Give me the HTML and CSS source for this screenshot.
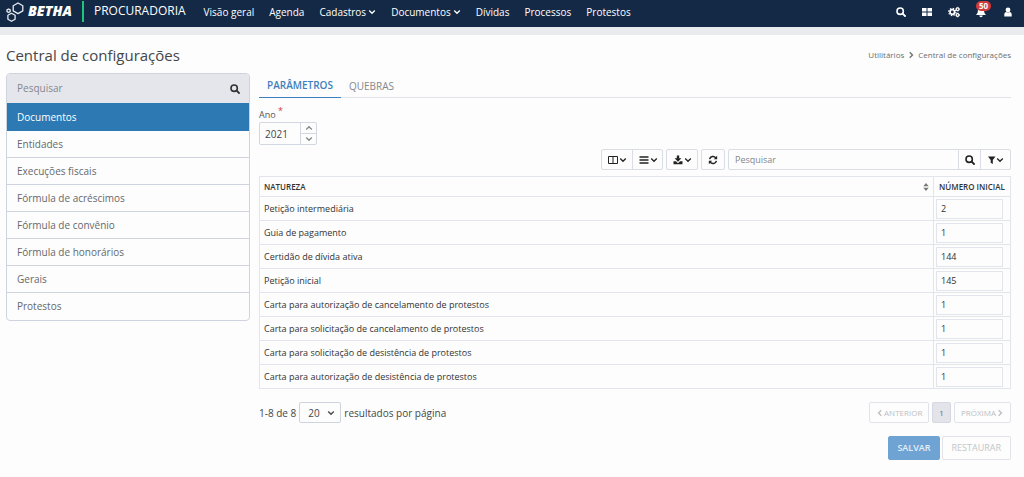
FILE: index.html
```html
<!DOCTYPE html>
<html lang="pt-BR">
<head>
<meta charset="utf-8">
<meta name="viewport" content="width=device-width, initial-scale=1">
<title>Central de configurações</title>
<link rel="stylesheet" href="styles.css">
</head>
<body>
<svg class="sprite" aria-hidden="true">
  <symbol id="search" viewBox="0 0 12 12"><circle cx="5" cy="5" r="3.8" fill="none" stroke="currentColor" stroke-width="1.9"/><path d="M8 8L10.800 10.800" stroke="currentColor" stroke-width="2.2" stroke-linecap="round"/></symbol>
  <symbol id="down" viewBox="0 0 8 8"><path d="M1.2 2.5L4 5.3L6.800 2.5" fill="none" stroke="currentColor" stroke-width="1.3"/></symbol>
  <symbol id="up" viewBox="0 0 8 8"><path d="M1.2 5.5L4 2.700L6.800 5.500" fill="none" stroke="currentColor" stroke-width="1.3"/></symbol>
  <symbol id="left" viewBox="0 0 8 8"><path d="M5.300 1.200L2.500 4L5.300 6.800" fill="none" stroke="currentColor" stroke-width="1.300"/></symbol>
  <symbol id="right" viewBox="0 0 8 8"><path d="M2.700 1.200L5.500 4L2.700 6.800" fill="none" stroke="currentColor" stroke-width="1.300"/></symbol>
</svg>

<header class="topbar">
  <a class="brand" href="#">
    <svg class="brand-mark" viewBox="0 0 18 20" aria-hidden="true"><g fill="none" stroke="#e8edf4" stroke-width="1.300" stroke-linejoin="round"><path d="M12 1l4.800 2.700v5.200L12 11.600 7.200 8.900V3.700z"/><path d="M5.500 11.300l3.600 2v4l-3.600 2-3.600-2v-4z"/><path d="M2.600 7l1.600.9v1.700l-1.600.9-1.600-.9V7.900z"/></g></svg>
    <span class="brand-name">BETHA</span>
  </a>
  <span class="product">PROCURADORIA</span>
  <nav class="menu">
    <a href="#">Visão geral</a>
    <a href="#">Agenda</a>
    <a href="#">Cadastros<svg class="chev"><use href="#down"/></svg></a>
    <a href="#">Documentos<svg class="chev"><use href="#down"/></svg></a>
    <a href="#">Dívidas</a>
    <a href="#">Processos</a>
    <a href="#">Protestos</a>
  </nav>
  <div class="tools">
    <button type="button" aria-label="Pesquisar"><svg class="icon small"><use href="#search"/></svg></button>
    <button type="button" aria-label="Aplicativos"><svg class="icon" viewBox="0 0 12 12"><path fill="currentColor" d="M1 2h4.500v3.500H1zM6.500 2H11v3.500H6.500zM1 6.500h4.500V10H1zM6.500 6.500H11V10H6.500z"/></svg></button>
    <button type="button" aria-label="Configurações"><svg class="icon" viewBox="0 0 12 12"><g fill="none" stroke="currentColor"><circle cx="4.300" cy="6" r="2.300" stroke-width="1.700"/><circle cx="4.300" cy="6" r="3.600" stroke-width="1.200" stroke-dasharray="1.400 1.427"/><circle cx="9.600" cy="3.200" r="1.300" stroke-width="1.200"/><circle cx="9.600" cy="9" r="1.300" stroke-width="1.200"/><circle cx="9.600" cy="3.200" r="2" stroke-width=".8" stroke-dasharray="1 1.100"/><circle cx="9.600" cy="9" r="2" stroke-width=".8" stroke-dasharray="1 1.100"/></g></svg></button>
    <button type="button" class="bell" aria-label="Notificações"><svg class="icon" viewBox="0 0 12 12"><path fill="currentColor" d="M6 2c2.200 0 3.200 1.500 3.200 3.300 0 1.700.7 2.700 1.900 3.700H.9c1.200-1 1.900-2 1.900-3.700C2.800 3.500 3.800 2 6 2zM4.300 9.500h3.400a1.700 1.700 0 0 1-3.400 0z"/></svg><span class="badge">50</span></button>
    <button type="button" aria-label="Usuário"><svg class="icon" viewBox="0 0 12 12"><circle cx="6" cy="4" r="2.400" fill="currentColor"/><path fill="currentColor" d="M2.300 10.500V8.500C2.300 6.900 3.200 5.900 4.300 5.900c1 .9 2.400.9 3.400 0 1.100 0 2 1 2 2.600v2z"/></svg></button>
  </div>
</header>

<main class="page">
  <div class="heading">
    <h1>Central de configurações</h1>
    <nav class="crumbs" aria-label="Trilha"><a href="#">Utilitários</a><svg class="chev"><use href="#right"/></svg><a href="#">Central de configurações</a></nav>
  </div>

  <div class="columns">
    <aside class="sidebar">
      <form class="side-search">
        <input type="text" placeholder="Pesquisar" aria-label="Pesquisar configuração">
        <button type="button" aria-label="Buscar"><svg class="icon small"><use href="#search"/></svg></button>
      </form>
      <nav class="side-list">
        <a class="active" href="#">Documentos</a>
        <a href="#">Entidades</a>
        <a href="#">Execuções fiscais</a>
        <a href="#">Fórmula de acréscimos</a>
        <a href="#">Fórmula de convênio</a>
        <a href="#">Fórmula de honorários</a>
        <a href="#">Gerais</a>
        <a href="#">Protestos</a>
      </nav>
    </aside>

    <section class="content">
      <div class="tabs" role="tablist">
        <button type="button" role="tab" aria-selected="true" class="tab current">PARÂMETROS</button>
        <button type="button" role="tab" aria-selected="false" class="tab">QUEBRAS</button>
      </div>

      <div class="field">
        <label for="ano">Ano <sup>*</sup></label>
        <div class="spinner">
          <input id="ano" type="text" inputmode="numeric" value="2021">
          <div class="steps">
            <button type="button" aria-label="Aumentar"><svg class="chev"><use href="#up"/></svg></button>
            <button type="button" aria-label="Diminuir"><svg class="chev"><use href="#down"/></svg></button>
          </div>
        </div>
      </div>

      <div class="toolbar">
        <div class="group">
          <button type="button" class="wide" aria-label="Colunas"><svg class="icon" viewBox="0 0 12 12"><path fill="none" stroke="currentColor" d="M1.500 2.500h9v7h-9zM6 2.500v7" stroke-width="1"/></svg><svg class="chev"><use href="#down"/></svg></button>
          <button type="button" class="wide" aria-label="Densidade"><svg class="icon" viewBox="0 0 12 12"><path stroke="currentColor" stroke-width="1.400" d="M1.500 3h9M1.500 6h9M1.500 9h9"/></svg><svg class="chev"><use href="#down"/></svg></button>
        </div>
        <div class="group"><button type="button" class="wide" aria-label="Exportar"><svg class="icon" viewBox="0 0 12 12"><path fill="currentColor" d="M4.800 1.500h2.400v2.800h2.200L6 7.700 2.600 4.300h2.200zM1.500 7.300h2.400L6 9.200l2.100-1.900h2.400v3h-9z"/></svg><svg class="chev"><use href="#down"/></svg></button></div>
        <div class="group"><button type="button" class="narrow" aria-label="Atualizar"><svg class="icon small" viewBox="0 0 12 12"><path fill="none" stroke="currentColor" stroke-width="1.800" d="M1.900 5A4.200 4.200 0 0 1 9.400 3.500M10.100 7A4.200 4.200 0 0 1 2.600 8.500"/><path fill="currentColor" d="M11 1v4H7zM1 11V7h4z"/></svg></button></div>
        <form class="group search">
          <input type="text" placeholder="Pesquisar" aria-label="Pesquisar natureza">
          <button type="button" class="narrow" aria-label="Buscar"><svg class="icon small"><use href="#search"/></svg></button>
          <button type="button" class="wide" aria-label="Filtrar"><svg class="icon filter" viewBox="0 0 9 12"><path fill="currentColor" d="M1 2.500h7.500L5.800 6V10L3.700 8.800V6z"/></svg><svg class="chev"><use href="#down"/></svg></button>
        </form>
      </div>

      <table class="grid">
        <thead>
          <tr><th scope="col"><div class="sortable">NATUREZA<svg class="sort" viewBox="0 0 6 8" aria-hidden="true"><path fill="currentColor" d="M3 0l2.700 3.200H.3zM3 8l2.700-3.200H.3z"/></svg></div></th><th scope="col" class="num">NÚMERO INICIAL</th></tr>
        </thead>
        <tbody>
          <tr><td>Petição intermediária</td><td class="num"><input type="text" value="2" aria-label="Petição intermediária"></td></tr>
          <tr><td>Guia de pagamento</td><td class="num"><input type="text" value="1" aria-label="Guia de pagamento"></td></tr>
          <tr><td>Certidão de dívida ativa</td><td class="num"><input type="text" value="144" aria-label="Certidão de dívida ativa"></td></tr>
          <tr><td>Petição inicial</td><td class="num"><input type="text" value="145" aria-label="Petição inicial"></td></tr>
          <tr><td>Carta para autorização de cancelamento de protestos</td><td class="num"><input type="text" value="1" aria-label="Carta para autorização de cancelamento de protestos"></td></tr>
          <tr><td>Carta para solicitação de cancelamento de protestos</td><td class="num"><input type="text" value="1" aria-label="Carta para solicitação de cancelamento de protestos"></td></tr>
          <tr><td>Carta para solicitação de desistência de protestos</td><td class="num"><input type="text" value="1" aria-label="Carta para solicitação de desistência de protestos"></td></tr>
          <tr><td>Carta para autorização de desistência de protestos</td><td class="num"><input type="text" value="1" aria-label="Carta para autorização de desistência de protestos"></td></tr>
        </tbody>
      </table>

      <div class="footer">
        <div class="results">
          <span>1-8 de 8</span>
          <span class="select"><select id="size"><option>20</option><option>50</option></select><svg class="chev"><use href="#down"/></svg></span>
          <label for="size">resultados por página</label>
        </div>
        <nav class="pager" aria-label="Paginação">
          <button type="button" disabled><svg class="chev"><use href="#left"/></svg>ANTERIOR</button>
          <button type="button" class="on">1</button>
          <button type="button" disabled>PRÓXIMA<svg class="chev"><use href="#right"/></svg></button>
        </nav>
      </div>

      <div class="actions">
        <button type="button" class="save" disabled>SALVAR</button>
        <button type="button" class="reset" disabled>RESTAURAR</button>
      </div>
    </section>
  </div>
</main>
</body>
</html>
```
FILE: styles.css
```css
* { box-sizing: border-box; }
body {
  margin: 0;
  background: #fcfdfc;
  color: #45464a;
  font: 10px/14px "Open Sans", "Noto Sans", sans-serif;
}
button, input, select { font: inherit; color: inherit; margin: 0; border-radius: 0; }
button { padding: 0; border: 0; background: none; display: inline-flex; align-items: center; justify-content: center; }
input { min-width: 0; outline: 0; }
input::placeholder { color: #85878b; opacity: 1; }
a { color: inherit; text-decoration: none; }
.sprite { position: absolute; width: 0; height: 0; }
.icon { width: 12px; height: 12px; flex: none; }
.icon.small { width: 10px; height: 10px; }
.chev { width: 8px; height: 8px; flex: none; }

.topbar {
  display: flex;
  align-items: center;
  height: 27px;
  padding: 0 6px 4px;
  background: #142945;
  color: #fff;
}
.brand { display: flex; align-items: center; gap: 4px; padding-right: 10px; border-right: 2px solid #1fc47d; height: 21px; }
.brand-mark { width: 18px; height: 20px; }
.brand-name { font-size: 14px; line-height: 18px; padding-bottom: 2px; font-weight: 800; font-style: italic; }
.product { padding: 0 18px 2px 10px; font-size: 12px; }
.menu { display: flex; gap: 15px; }
.menu a { display: flex; align-items: center; gap: 2px; }
.tools { display: flex; gap: 15px; margin-left: auto; padding-right: 4px; }
.bell { position: relative; }
.badge {
  position: absolute;
  top: -5px;
  left: 1px;
  padding: 0 3px;
  border-radius: 5px;
  background: #d43a3a;
  font-size: 8px;
  line-height: 10px;
  font-weight: 700;
}

.page { border-top: 8px solid #e9ebef; padding: 8px 13px 16px 6px; }
.heading { display: flex; justify-content: space-between; align-items: center; height: 24px; }
h1 { margin: 0; font-size: 15px; line-height: 24px; font-weight: 400; }
.crumbs { display: flex; align-items: center; gap: 3px; font-size: 8px; color: #6c6e72; }

.columns { display: grid; grid-template-columns: 244px minmax(0, 1fr); gap: 9px; align-items: start; padding-top: 6px; }
.sidebar { border: 1px solid #cfd3de; border-radius: 4px; overflow: hidden; color: #66686c; }
.side-search { display: flex; height: 29px; background: #e5e6eb; padding-right: 9px; }
.side-search input { flex: 1; border: 0; background: none; padding: 0 10px 2px; }
.side-search button { color: #333; }
.side-list { display: flex; flex-direction: column; }
.side-list a { padding: 6px 10px; border-bottom: 1px solid #cfd3de; }
.side-list a:last-child { border-bottom: 0; padding-bottom: 7px; }
.side-list .active { background: #2d79b4; color: #fff; border-color: #2d79b4; padding-top: 7px; }

.tabs { display: flex; border-bottom: 1px solid #dfe2e8; height: 25px; }
.tab { padding: 0 8px; color: #85878b; height: 25px; }
.tab.current { color: #3f7fc0; font-weight: 600; border-bottom: 1px solid #3f7fc0; }
.field { padding-top: 9px; }
.field label { display: block; font-size: 9px; line-height: 15px; color: #55575b; }
.field sup { color: #d43a3a; line-height: 0; font-size: 9px; }
.spinner { display: flex; width: 58px; height: 23px; border: 1px solid #d3d7e2; border-radius: 2px; }
.spinner input { flex: 1; border: 0; background: none; padding: 0 5px; }
.steps { display: flex; flex-direction: column; width: 16px; border-left: 1px solid #d3d7e2; }
.steps button { flex: 1; color: #85878b; }
.steps button + button { border-top: 1px solid #d3d7e2; }

.toolbar { display: flex; justify-content: flex-end; gap: 3px; padding: 4px 0 6px; color: #222; }
.group { display: flex; height: 21px; border: 1px solid #dadde6; border-radius: 2px; }
.group > * + * { border-left: 1px solid #dadde6; }
.wide { width: 30px; }
.narrow { width: 22px; }
.filter { width: 9px; }
.search { width: 283px; }
.search input { flex: 1; border: 0; background: none; padding: 0 6px; font-size: 9px; }

.grid { width: 100%; border-collapse: collapse; font-size: 9px; line-height: 12px; color: #333; }
.grid th, .grid td { border: 1px solid #e3e5ec; text-align: left; padding: 0 4px; height: 24px; }
.grid th { height: 20px; font-size: 8px; font-weight: 600; }
.sortable { display: flex; justify-content: space-between; align-items: center; }
.sort { width: 6px; height: 8px; color: #77797d; }
.grid .num { width: 77px; padding: 0 2px; white-space: nowrap; }
.grid th.num { text-align: center; }
.num input { display: block; width: 67px; height: 20px; border: 1px solid #e3e5ec; background: none; padding: 0 4px; }

.footer { display: flex; justify-content: space-between; align-items: center; padding-top: 13px; }
.results { display: flex; align-items: center; gap: 3px; }
.select { position: relative; display: flex; }
.select select { appearance: none; width: 42px; height: 21px; padding: 0 8px; border: 1px solid #cfd3de; border-radius: 2px; background: none; }
.select .chev { position: absolute; right: 6px; top: 7px; pointer-events: none; }
.pager { display: flex; gap: 3px; font-size: 8px; }
.pager button { height: 21px; padding: 0 6px; border: 1px solid #e1e3ea; border-radius: 2px; color: #bcbec3; }
.pager .on { background: #e3e4ea; border-color: #d5d8e2; color: #66686c; }
.actions { display: flex; justify-content: flex-end; gap: 2px; padding-top: 13px; }
.actions button { height: 24px; padding: 0 9px; border: 1px solid #e1e3ea; border-radius: 2px; color: #c4c6ca; font-size: 9px; }
.actions .save { background: #6fa3d3; border-color: #6fa3d3; color: #e4eef8; font-weight: 600; padding: 0 8px; }
```
